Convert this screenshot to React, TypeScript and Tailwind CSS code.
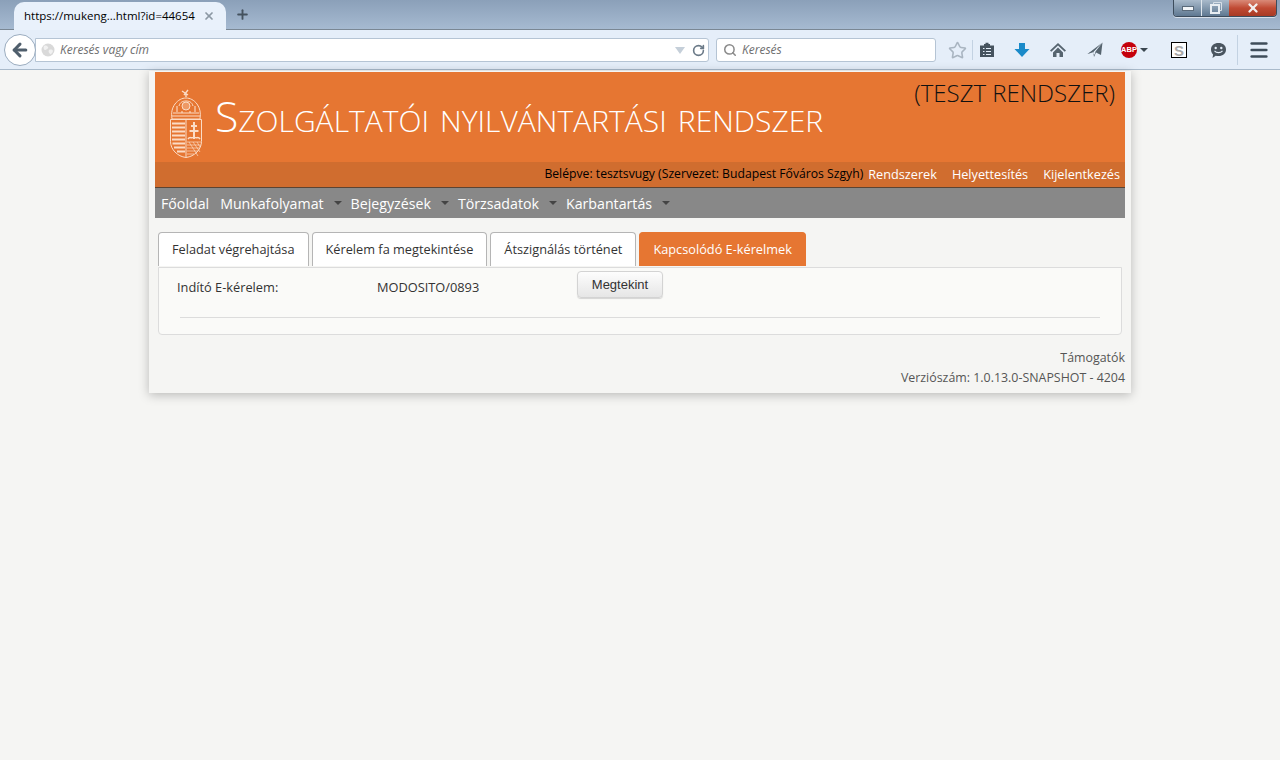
import React from 'react';
import { Menu, Plus, X, Search, Star, RotateCw, ArrowLeft } from 'lucide-react';

const sans = "font-['Open_Sans',sans-serif]";

function Crest() {
    return (
        <svg width="34" height="70" viewBox="0 0 34 70" fill="none" stroke="#fbdcc6" strokeWidth="1" className="shrink-0">
            <path d="M13 2l6 4M19 1l-4 5M17 5v3" strokeWidth="1.4" />
            <path d="M3 30c-1-6 0-11 3-15 3-4 7-6 11-6s8 2 11 6c3 4 4 9 3 15z" />
            <path d="M10 17c1-4 4-5 7-5s6 1 7 5" />
            <circle cx="17" cy="17" r="4" fill="#fbdcc6" fillOpacity="0.35" />
            <path d="M4 24h26M3 27h28M8 17v6M13 22v2M21 22v2M26 17v6" strokeWidth="1.1" />
            <path d="M1.500 30.500h31v22c0 8-7 15-15.500 16C8.500 67.500 1.500 60.500 1.500 52.500z" />
            <path d="M17 31v37" />
            <path d="M3 34.500h13M3 38.500h13M3 42.500h13M3 46.500h13M3 50.500h13M3.500 54.500h12.500M5 58.500h11M8 62.500h8" strokeWidth="2" />
            <path d="M25 33v17M22 37h6M20.500 42h9" strokeWidth="2" />
            <path d="M19 50c2-3 3 0 6-2 3 2 4-1 6 2" strokeWidth="1.500" />
            <path d="M18 53h14M18 56h14M18 59h13M18 62h11M18 65h7M20 53l9 14M24 53l7 10M28 53l3 5" strokeWidth="0.7" />
        </svg>
    );
}

function Tab({ label, active }: { label: string; active?: boolean }) {
    return (
        <div className={`h-[34px] px-[13px] flex items-center rounded-t-[4px] border border-b-0 text-[12.750px] ${active ? "bg-[#e67632] border-[#e67632] text-white" : "bg-white border-[#b5b5b5] text-[#333]"}`}>
            {label}
        </div>
    );
}

function NavItem({ label }: { label: string }) {
    return (
        <div className="flex items-center">
            <span>{label}</span>
            <span className="w-0 h-0 ml-[10px] border-x-[4px] border-x-transparent border-t-[4px] border-t-[#444]" />
        </div>
    );
}

function ToolbarIcons() {
    return (
        <div className="flex items-center h-full text-[#4a5a6a]">
            <Star size={19} strokeWidth={2} className="ml-[12px] text-[#a9b5c1]" />
            <div className="w-px h-[20px] bg-[#c3d2e2] ml-[5px]" />
            <svg width="16" height="16" viewBox="0 0 16 16" className="ml-[6px]" fill="#46535f">
                <path d="M1 3.500h4V2h1.500V.8h3V2H11v1.500h4V15H1z" />
                <path d="M4 6h1.500v1H4zM7 6h5v1H7zM4 9h1.500v1H4zM7 9h5v1H7zM4 12h1.500v1H4zM7 12h5v1H7z" fill="#e4eef9" />
            </svg>
            <svg width="16" height="16" viewBox="0 0 16 16" className="ml-[19px]" fill="#1a8ac9">
                <path d="M5 1h6v6h4.500L8 15 .5 7H5z" />
            </svg>
            <svg width="16" height="16" viewBox="0 0 16 16" className="ml-[20px]" fill="#56646f">
                <path d="M8 1 0 8.500l1.300 1.300L8 3.500l6.700 6.300L16 8.500z" />
                <path d="M3 10.500 8 5.500l5 5V15H9.500v-4h-3v4H3z" />
            </svg>
            <svg width="16" height="16" viewBox="0 0 16 16" className="ml-[21px]" fill="#56646f">
                <path d="M15.500.5 14 13 9 10.500 7 15l-.8-5.500L.5 12 10 6 5.800 10l1.700 3 1-3.500L15.500.5z" />
                <path d="M15.500.5.500 12l5.500-1.800z" />
            </svg>
            <div className="ml-[18px] w-[16px] h-[16px] rounded-full bg-[#c4000b] flex items-center justify-center text-white text-[7.500px] font-bold font-['Liberation_Sans',sans-serif]">ABP</div>
            <span className="ml-[3px] w-0 h-0 border-x-[4px] border-x-transparent border-t-[4px] border-t-[#3a4650]" />
            <div className="ml-[23px] w-4 h-4 border border-black bg-white flex items-center justify-center text-[#a8a8a8] text-[15px] font-bold leading-none font-['Liberation_Sans',sans-serif]">S</div>
            <svg width="17" height="17" viewBox="0 0 17 17" className="ml-[23px]">
                <path d="M8.500 1C13 1 16 3.500 16 7.500S13 14 8.500 14c-1 0-2 0-2.800-.3L2.500 16l.6-3.500C1.800 11.300 1 9.500 1 7.500 1 3.500 4 1 8.500 1z" fill="#4a5560" />
                <circle cx="5.700" cy="6" r="1.200" fill="#e4eef9" />
                <circle cx="11.300" cy="6" r="1.200" fill="#e4eef9" />
                <path d="M4.500 8.800c2 2.400 6 2.400 8 0" stroke="#e4eef9" strokeWidth="1.200" fill="none" />
            </svg>
            <div className="w-px h-[30px] bg-[#c3d2e2] ml-[10px]" />
            <Menu size={22} strokeWidth={2.8} className="ml-[10px] text-[#3f4d5a]" />
        </div>
    );
}

function WindowButtons() {
    return (
        <div className="flex h-[17px] mr-[3px] rounded-b-[4px] overflow-hidden border border-t-0 border-[#3d4c5c] shadow-[0_1px_0_rgba(255,255,255,0.6)]">
            <div className="w-[28px] bg-gradient-to-b from-[#a9bacb] to-[#5f7891] flex items-center justify-center border-r border-[#dfe6ed]">
                <span className="w-[10px] h-[3px] bg-[#f1f4f7] border border-[#5a6a7a] box-content" />
            </div>
            <div className="w-[27px] bg-gradient-to-b from-[#a9bacb] to-[#5f7891] flex items-center justify-center">
                <svg width="12" height="12" viewBox="0 0 12 12" fill="none" stroke="#2f3d4b">
                    <path d="M3.500 2.500V.5h8v8H9.500" stroke="#d7dfe7" />
                    <rect x="1" y="3" width="8" height="8" strokeWidth="2" stroke="#e8edf2" />
                </svg>
            </div>
            <div className="w-[47px] bg-gradient-to-b from-[#d98a78] via-[#c04a33] to-[#a83a24] flex items-center justify-center">
                <X size={14} strokeWidth={4} className="text-[#f2eeee]" />
            </div>
        </div>
    );
}

function BrowserChrome() {
    return (
        <div className={`h-[71px] flex flex-col shrink-0 ${sans}`}>
            <div className="h-[30px] flex justify-between bg-gradient-to-b from-[#8ba0b9] to-[#a6bad1] border-b border-[#7a8794]">
                <div className="flex items-center pl-[14px]">
                    <div className="w-[212px] h-[29px] mt-[2px] -mb-[1px] bg-[#e9f1fb] rounded-t-[10px] flex items-center justify-between pl-[10px] pr-[11px] text-[11.500px] text-black">
                        <span>https://mukeng...html?id=44654</span>
                        <X size={12} strokeWidth={3.5} className="text-[#8c98a4]" />
                    </div>
                    <Plus size={15} strokeWidth={3} className="ml-[9px] text-[#45525f]" />
                </div>
                <WindowButtons />
            </div>
            <div className="h-[40px] pt-px flex items-center bg-[#e5eef9] border-b border-[#a9bacb]">
                <div className="w-[32px] h-[32px] ml-[4px] rounded-full bg-white border border-[#9aacbf] flex items-center justify-center z-10 shrink-0">
                    <ArrowLeft size={20} strokeWidth={3.6} className="text-[#4f5e6c]" />
                </div>
                <div className="w-[674px] h-[24px] -ml-[1px] bg-white border border-[#b5c4d4] rounded-r-[3px] flex items-center pl-[5px] pr-[3px]">
                    <svg width="14" height="14" viewBox="0 0 14 14">
                        <circle cx="7" cy="7" r="6.500" fill="#d9d9d9" />
                        <path d="M3 3c2-1 3 0 4 1S5 7 4 7 2 5 3 3zM8 7c2-1 4 0 4 1s-2 4-3 3-2-3-1-4z" fill="#f1f1f1" />
                    </svg>
                    <span className="ml-[5px] text-[12px] italic text-[#6e6e6e] flex-1">Keresés vagy cím</span>
                    <span className="w-0 h-0 border-x-[5px] border-x-transparent border-t-[7px] border-t-[#c5cfd9]" />
                    <RotateCw size={13} strokeWidth={3} className="ml-[7px] text-[#6b7a88]" />
                </div>
                <div className="w-[220px] h-[24px] ml-[7px] bg-white border border-[#b5c4d4] rounded-[3px] flex items-center pl-[6px]">
                    <Search size={14} strokeWidth={2.6} className="text-[#8a8a8a]" />
                    <span className="ml-[5px] text-[12px] italic text-[#6e6e6e]">Keresés</span>
                </div>
                <ToolbarIcons />
            </div>
        </div>
    );
}

function App() {
    return (
        <div className={`w-[1280px] h-[760px] overflow-hidden flex flex-col bg-[#f5f5f3] ${sans}`}>
            <BrowserChrome />
            <div className="w-[982px] h-[322px] ml-[149px] px-[6px] pt-px bg-[#f5f5f3] shadow-[0_2px_10px_rgba(0,0,0,0.25)]">
                <div className="h-[90px] bg-[#e67632] flex items-start justify-between pl-[14px] pr-[10px]">
                    <div className="flex items-start">
                        <div className="mt-[17px]"><Crest /></div>
                        <h1 className="ml-[12px] mt-[23px] text-[42.800px] font-light text-white leading-none [font-variant:small-caps] whitespace-nowrap">Szolgáltatói nyilvántartási rendszer</h1>
                    </div>
                    <div className="text-[24px] font-light text-[#111] leading-none mt-[9px]">(TESZT RENDSZER)</div>
                </div>
                <div className="h-[26px] bg-[#d06d2f] border-b border-[#5b4433] flex items-center justify-end pr-[5px] text-[12.700px] text-white whitespace-nowrap">
                    <span className="text-black text-[12.200px] mr-[5px]">Belépve: tesztsvugy (Szervezet: Budapest Főváros Szgyh)</span>
                    <span className="mr-[15px]">Rendszerek</span>
                    <span className="mr-[15px]">Helyettesítés</span>
                    <span>Kijelentkezés</span>
                </div>
                <div className="h-[30px] pt-px bg-[#888888] flex items-center pl-[6px] text-[14.200px] text-white whitespace-nowrap">
                    <span className="mr-[11px]">Főoldal</span>
                    <div className="mr-[9px]"><NavItem label="Munkafolyamat" /></div>
                    <div className="mr-[9px]"><NavItem label="Bejegyzések" /></div>
                    <div className="mr-[9px]"><NavItem label="Törzsadatok" /></div>
                    <NavItem label="Karbantartás" />
                </div>
                <div className="flex gap-[3px] mt-[14px] ml-[3px]">
                    <Tab label="Feladat végrehajtása" />
                    <Tab label="Kérelem fa megtekintése" />
                    <Tab label="Átszignálás történet" />
                    <Tab label="Kapcsolódó E-kérelmek" active />
                </div>
                <div className="mx-[3px] mt-px h-[68px] border border-[#dcdcdc] rounded-b-[4px] bg-[#fafaf8] px-[18px] text-[12.800px] text-[#333]">
                    <div className="flex items-start h-[49px]">
                        <span className="w-[200px] mt-[10px]">Indító E-kérelem:</span>
                        <span className="w-[200px] mt-[10px]">MODOSITO/0893</span>
                        <button className="w-[86px] h-[27px] mt-[3px] rounded-[4px] border border-[#d3d3d3] bg-gradient-to-b from-[#fdfdfd] to-[#e6e6e6] shadow-[0_1px_1px_rgba(0,0,0,0.15)] text-[13px] text-[#333] font-['Liberation_Sans',sans-serif]">Megtekint</button>
                    </div>
                    <div className="h-px bg-[#dcdcdc] mx-[3px]" />
                </div>
                <div className="mt-[13px] text-right text-[12.400px] text-[#555] leading-[20px]">
                    <div>Támogatók</div>
                    <div>Verziószám: 1.0.13.0-SNAPSHOT - 4204</div>
                </div>
            </div>
        </div>
    );
}

export default App;
